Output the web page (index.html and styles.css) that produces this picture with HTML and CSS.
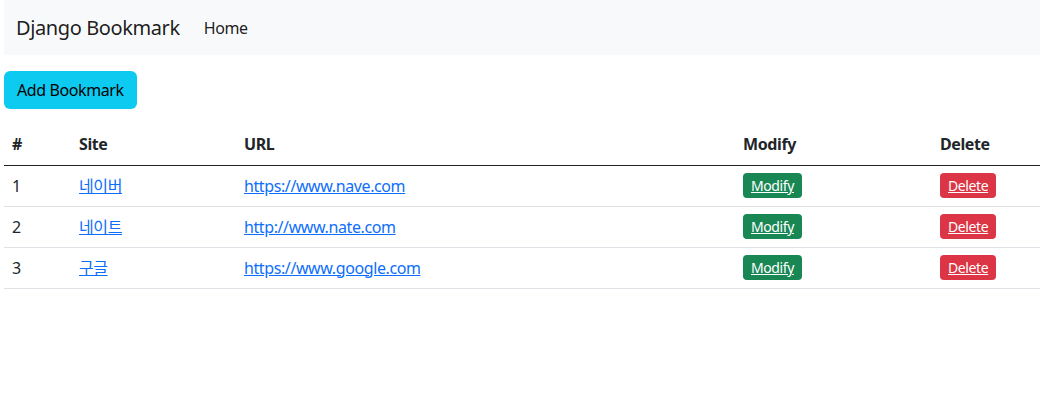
FILE: index.html
```html
<!DOCTYPE html>
<html lang="ko">
<head>
    <meta charset="UTF-8">
    <meta name="viewport" content="width=device-width, initial-scale=1.0">
    <title>Django Bookmark</title>
    <link rel="stylesheet" href="styles.css">
</head>
<body>

    <nav class="navbar">
        <a href="#" class="navbar-brand">Django Bookmark</a>
        <a href="#" class="nav-link">Home</a>
    </nav>

    <div class="content">
        <a href="#" class="btn btn-info">Add Bookmark</a>

        <table class="table">
            <thead>
                <tr>
                    <th class="col-num">#</th>
                    <th class="col-site">Site</th>
                    <th class="col-url">URL</th>
                    <th class="col-modify">Modify</th>
                    <th>Delete</th>
                </tr>
            </thead>
            <tbody>
                <tr>
                    <td>1</td>
                    <td><a href="#">네이버</a></td>
                    <td><a href="#">https://www.nave.com</a></td>
                    <td><a href="#" class="btn btn-sm btn-success">Modify</a></td>
                    <td><a href="#" class="btn btn-sm btn-danger">Delete</a></td>
                </tr>
                <tr>
                    <td>2</td>
                    <td><a href="#">네이트</a></td>
                    <td><a href="#">http://www.nate.com</a></td>
                    <td><a href="#" class="btn btn-sm btn-success">Modify</a></td>
                    <td><a href="#" class="btn btn-sm btn-danger">Delete</a></td>
                </tr>
                <tr>
                    <td>3</td>
                    <td><a href="#">구글</a></td>
                    <td><a href="#">https://www.google.com</a></td>
                    <td><a href="#" class="btn btn-sm btn-success">Modify</a></td>
                    <td><a href="#" class="btn btn-sm btn-danger">Delete</a></td>
                </tr>
            </tbody>
        </table>
    </div>

</body>
</html>
```

FILE: styles.css
```css
/* --- base --- */
* { margin: 0; padding: 0; box-sizing: border-box; }
body {
    font-family: "Noto Sans", "Noto Sans CJK KR", sans-serif;
    font-size: 16px;
    line-height: 1.5;
    letter-spacing: -0.4px;
    color: #212529;
    background: #fff;
    padding-left: 4px;
}
a { color: #0d6efd; }

/* --- navbar --- */
.navbar {
    display: flex;
    align-items: center;
    height: 55px;
    padding: 0 12px;
    background-color: #f8f9fa;
}
.navbar-brand {
    font-size: 20px;
    color: rgba(0, 0, 0, 0.9);
    text-decoration: none;
    margin-right: 16px;
}
.nav-link {
    color: rgba(0, 0, 0, 0.9);
    text-decoration: none;
    padding: 8px;
    font-size: 16px;
}

/* --- content --- */
.content { padding-top: 16px; }

.btn {
    display: inline-block;
    border-radius: 6px;
    padding: 7px 13px;
    font-size: 16px;
    line-height: 1.5;
    text-decoration: none;
}
.btn-info { background-color: #0dcaf0; color: #000; }
.btn-sm {
    padding: 0 8px;
    font-size: 14px;
    border-radius: 4px;
    line-height: 25px;
    text-decoration: underline;
    color: #fff;
}
.btn-success { background-color: #198754; }
.btn-danger { background-color: #dc3545; }

/* --- table --- */
.table {
    width: 100%;
    margin-top: 15px;
    border-collapse: collapse;
}
.table th, .table td {
    text-align: left;
    padding: 0 8px;
    border-bottom: 1px solid #dee2e6;
    vertical-align: middle;
    height: 41px;
}
.table th { font-weight: 700; }
.table thead th { border-bottom: 1px solid #212529; }
.col-num { width: 67px; }
.col-site { width: 165px; }
.col-url { width: 499px; }
.col-modify { width: 197px; }
```
